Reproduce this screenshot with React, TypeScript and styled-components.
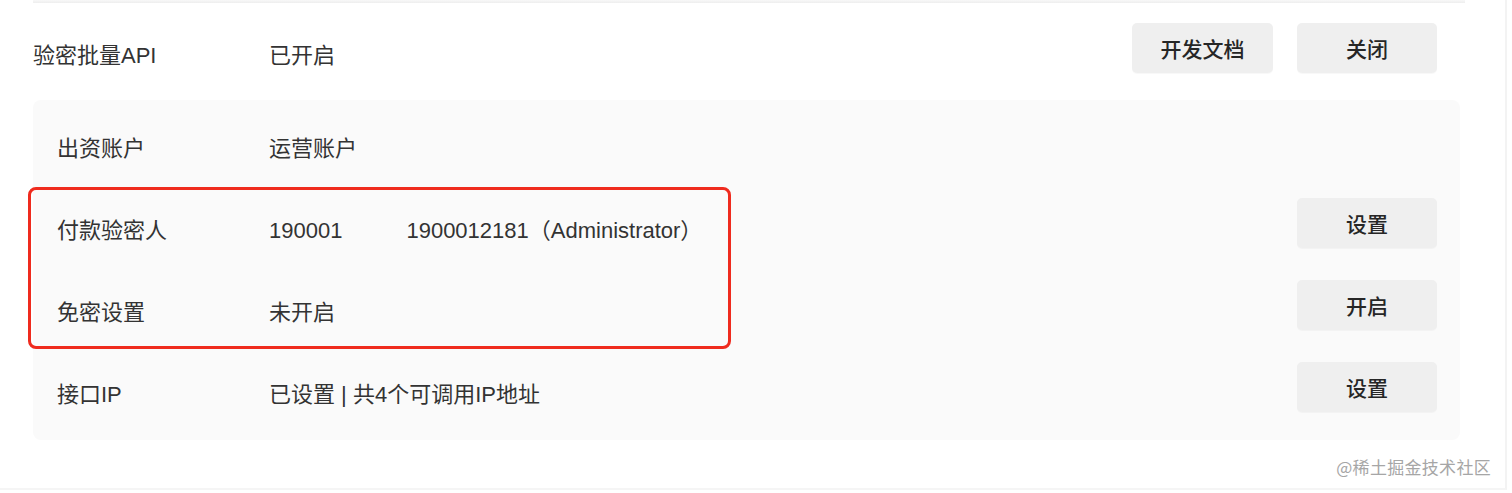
import React from "react";
import styled, { createGlobalStyle } from "styled-components";

const GlobalStyle = createGlobalStyle`
  html, body {
    margin: 0;
    padding: 0;
    background: #ffffff;
  }
  body {
    font-family: "Liberation Sans", "Noto Sans CJK SC", sans-serif;
    color: #333333;
    -webkit-font-smoothing: antialiased;
  }
`;

const Page = styled.div`
  position: relative;
  box-sizing: border-box;
  width: 1507px;
  height: 490px;
  padding: 0 45px 0 33px;
  border-right: 2px solid #f3f3f3;
  border-bottom: 2px solid #f5f5f5;
`;

const Divider = styled.div`
  height: 3px;
  margin-right: -5px;
  background: linear-gradient(#f8f8f8, #eeeeee);
`;

const Row = styled.div<{ $top?: number; $inset?: number }>`
  display: flex;
  align-items: flex-start;
  height: 50px;
  margin-top: ${(p) => p.$top ?? 0}px;
  padding-right: ${(p) => p.$inset ?? 0}px;
`;

const Cell = styled.div<{ $width?: number }>`
  flex: ${(p) => (p.$width ? `0 0 ${p.$width}px` : "1 1 auto")};
  padding-top: 18px;
  font-size: 22px;
  line-height: 30px;
  color: #333333;
  white-space: nowrap;
  display: flex;
  align-items: center;
`;

const Redacted = styled.span`
  display: inline-block;
  width: 64px;
`;

const Actions = styled.div`
  display: flex;
  gap: 24px;
  margin-left: auto;
`;

const Button = styled.button<{ $width?: number }>`
  box-sizing: border-box;
  width: ${(p) => p.$width ?? 140}px;
  height: 50px;
  border: none;
  border-radius: 5px;
  background: #efefef;
  box-shadow: 0 1px 1px rgba(0, 0, 0, 0.03);
  font-family: "Liberation Sans", "Noto Sans CJK SC", sans-serif;
  font-size: 21px;
  font-weight: 500;
  color: #262626;
  padding: 0;
  cursor: pointer;
`;

const Panel = styled.div`
  position: relative;
  margin-top: 27px;
  padding: 16px 23px 28px 24px;
  background: #fafafa;
  border-radius: 8px;
  display: flex;
  flex-direction: column;
  gap: 32px;
`;

const Highlight = styled.div`
  position: absolute;
  left: -5px;
  top: 87px;
  width: 703px;
  height: 162px;
  box-sizing: border-box;
  border: 3.5px solid #ef2b1e;
  border-radius: 8px;
  pointer-events: none;
`;

const Watermark = styled.div`
  position: absolute;
  right: 14px;
  top: 457px;
  font-family: "Noto Sans CJK SC", sans-serif;
  font-size: 17px;
  line-height: 20px;
  color: #a6a6a6;
  letter-spacing: 0.3px;
`;

type PanelRow = {
  label: string;
  value: React.ReactNode;
  action?: string;
};

const rows: PanelRow[] = [
  { label: "出资账户", value: "运营账户" },
  {
    label: "付款验密人",
    value: (
      <>
        190001
        <Redacted />
        1900012181（Administrator）
      </>
    ),
    action: "设置",
  },
  { label: "免密设置", value: "未开启", action: "开启" },
  { label: "接口IP", value: "已设置 | 共4个可调用IP地址", action: "设置" },
];

export default function App() {
  return (
    <>
      <GlobalStyle />
      <Page>
        <Divider />
        <Row $top={20} $inset={23}>
          <Cell $width={236}>验密批量API</Cell>
          <Cell>已开启</Cell>
          <Actions>
            <Button $width={141}>开发文档</Button>
            <Button>关闭</Button>
          </Actions>
        </Row>
        <Panel>
          {rows.map((r, i) => (
            <Row key={i}>
              <Cell $width={212}>{r.label}</Cell>
              <Cell>{r.value}</Cell>
              {r.action && (
                <Actions>
                  <Button>{r.action}</Button>
                </Actions>
              )}
            </Row>
          ))}
          <Highlight />
        </Panel>
        <Watermark>@稀土掘金技术社区</Watermark>
      </Page>
    </>
  );
}
